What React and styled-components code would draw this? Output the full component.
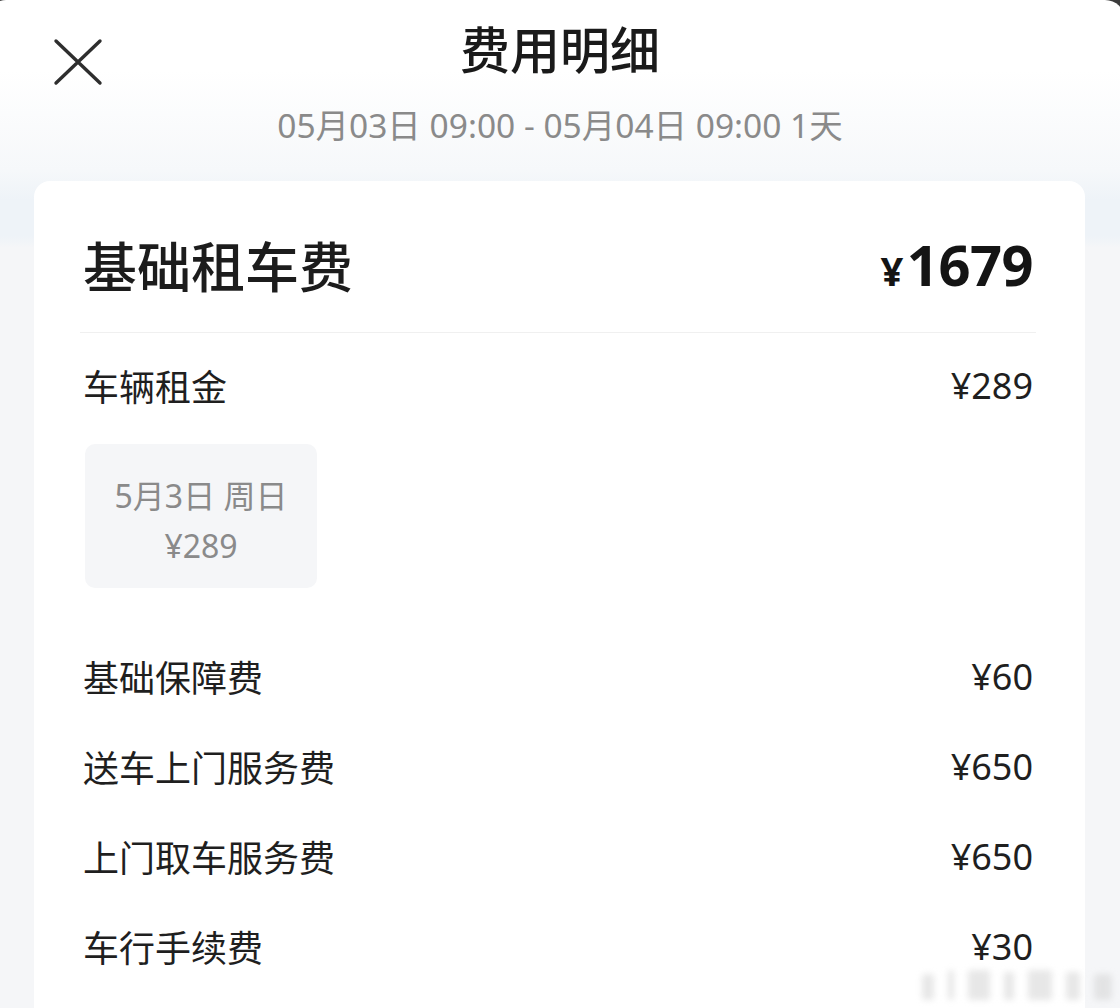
import React from "react";
import styled, { createGlobalStyle } from "styled-components";

const GlobalStyle = createGlobalStyle`
  body {
    margin: 0;
    background: #3b3b3b;
    font-family: "Noto Sans", "Noto Sans CJK SC", sans-serif;
  }
`;

const Page = styled.div`
  width: 1120px;
  height: 1008px;
  overflow: hidden;
  position: relative;
`;

const Sheet = styled.div`
  margin: 0 -5px 0 -14px;
  padding: 0 5px 0 14px;
  min-height: 1008px;
  border-radius: 20px 20px 0 0;
  background: linear-gradient(
    180deg,
    #ffffff 0px,
    #ffffff 70px,
    #f6f8fa 170px,
    #eef3f8 200px,
    #eef3f8 236px,
    #f5f6f8 248px,
    #f5f6f8 100%
  );
`;

const Header = styled.header`
  padding: 22px 0 36px;
`;

const TopRow = styled.div`
  display: grid;
  grid-template-columns: 1fr auto 1fr;
  height: 56px;
`;

const CloseButton = styled.button`
  justify-self: start;
  align-self: start;
  margin: 16px 0 0 53px;
  padding: 0;
  width: 50px;
  height: 48px;
  border: 0;
  background: none;
  color: #2e2e2e;
  display: flex;
`;

const Title = styled.h1`
  margin: 0;
  font-size: 50px;
  line-height: 56px;
  font-weight: 500;
  color: #1a1a1a;
`;

const Subtitle = styled.div`
  margin-top: 27px;
  text-align: center;
  font-size: 33.5px;
  line-height: 40px;
  color: #8a8a8a;
`;

const Card = styled.section`
  margin: 0 35px 0 34px;
  padding: 48px 52px 0 49px;
  background: #ffffff;
  border-radius: 16px 16px 0 0;
  min-height: 900px;
`;

const SectionHead = styled.div`
  display: flex;
  justify-content: space-between;
  align-items: center;
  height: 70px;
`;

const SectionTitle = styled.h2`
  margin: 0;
  font-size: 54px;
  font-weight: 500;
  color: #1c1c1c;
`;

const Total = styled.div`
  display: flex;
  align-items: baseline;
  font-weight: 700;
  color: #141414;
  font-size: 56px;
  letter-spacing: -0.5px;
`;

const Yen = styled.span`
  font-size: 40px;
  margin-right: 4px;
`;

const Divider = styled.hr`
  margin: 33px -3px 7px;
  border: 0;
  height: 1px;
  background: #f0f0f0;
`;

const Row = styled.div`
  display: flex;
  justify-content: space-between;
  align-items: center;
  height: 90px;
  font-size: 36px;
  color: #1f1f1f;
`;

const DayChip = styled.div`
  box-sizing: border-box;
  margin: 14px 0 43px 2px;
  width: 232px;
  height: 144px;
  padding-top: 27px;
  border-radius: 10px;
  background: #f5f6f8;
  display: flex;
  flex-direction: column;
  align-items: center;
  font-size: 32px;
  line-height: 50px;
  color: #8a8a8a;
`;

const Watermark = styled.div`
  position: absolute;
  right: 8px;
  bottom: 8px;
  display: flex;
  align-items: flex-end;
  gap: 14px;
  filter: blur(3px);
  opacity: 0.55;
`;

const WatermarkBar = styled.span`
  display: block;
  width: ${p => p.$w}px;
  height: ${p => p.$h}px;
  background: #d4d4d4;
  border-radius: 3px;
`;

const CloseIcon = () => (
  <svg width="50" height="48" viewBox="0 0 50 48" fill="none">
    <path
      d="M3 3 L47 45 M47 3 L3 45"
      stroke="currentColor"
      strokeWidth="3.4"
      strokeLinecap="round"
    />
  </svg>
);

const fees = [
  { name: "基础保障费", price: "¥60" },
  { name: "送车上门服务费", price: "¥650" },
  { name: "上门取车服务费", price: "¥650" },
  { name: "车行手续费", price: "¥30" },
];

const marks = [
  { w: 12, h: 26 },
  { w: 6, h: 30 },
  { w: 22, h: 30 },
  { w: 10, h: 28 },
  { w: 24, h: 30 },
  { w: 14, h: 28 },
  { w: 18, h: 26 },
];

export default function App() {
  return (
    <Page>
      <GlobalStyle />
      <Sheet>
        <Header>
          <TopRow>
            <CloseButton aria-label="关闭">
              <CloseIcon />
            </CloseButton>
            <Title>费用明细</Title>
          </TopRow>
          <Subtitle>05月03日 09:00 - 05月04日 09:00 1天</Subtitle>
        </Header>
        <Card>
          <SectionHead>
            <SectionTitle>基础租车费</SectionTitle>
            <Total>
              <Yen>¥</Yen>1679
            </Total>
          </SectionHead>
          <Divider />
          <Row>
            <span>车辆租金</span>
            <span>¥289</span>
          </Row>
          <DayChip>
            <span>5月3日 周日</span>
            <span>¥289</span>
          </DayChip>
          {fees.map(f => (
            <Row key={f.name}>
              <span>{f.name}</span>
              <span>{f.price}</span>
            </Row>
          ))}
        </Card>
      </Sheet>
      <Watermark aria-hidden="true">
        {marks.map((m, i) => (
          <WatermarkBar key={i} $w={m.w} $h={m.h} />
        ))}
      </Watermark>
    </Page>
  );
}
